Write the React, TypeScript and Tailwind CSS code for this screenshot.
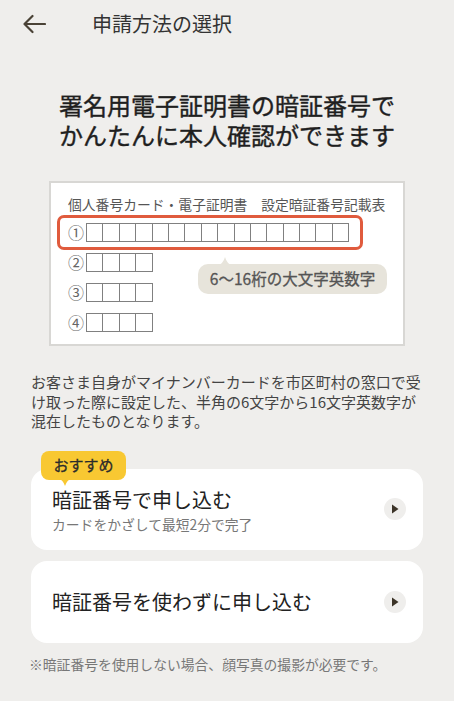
import React from "react";

const FONT = { fontFamily: '"Noto Sans CJK JP", "Noto Sans", sans-serif' };

function Cells({ n }: { n: number }) {
  return (
    <div className="flex border-l border-[#808080]">
      {Array.from({ length: n }).map((_, i) => (
        <div key={i} className="w-[16.4px] h-[19px] border-t border-b border-r border-[#808080] bg-white" />
      ))}
    </div>
  );
}

function Play() {
  return (
    <div className="w-[22px] h-[22px] rounded-full bg-[#efeeec] flex items-center justify-center shrink-0">
      <svg width="8" height="10" viewBox="0 0 8 10">
        <polygon points="1,0.5 7.5,5 1,9.5" fill="#3b3327" />
      </svg>
    </div>
  );
}

export default function App() {
  return (
    <div className="w-full min-h-[701px] bg-[#efeeec] text-[#333]" style={FONT}>
      <div className="h-[48px] flex items-center">
        <svg className="ml-[22px]" width="24" height="20" viewBox="0 0 24 20">
          <path d="M23 10H2.5M10.5 2L2.5 10L10.5 18" fill="none" stroke="#4a4236" strokeWidth="2.2" strokeLinecap="round" strokeLinejoin="round" />
        </svg>
        <div className="ml-[46px] text-[20px] leading-[28px] text-[#333]">申請方法の選択</div>
      </div>

      <div className="pt-[42px] text-center text-[24px] leading-[30px] text-[#1f1f1f] font-normal [-webkit-text-stroke:0.4px_#1f1f1f]">
        <div>署名用電子証明書の暗証番号で</div>
        <div>かんたんに本人確認ができます</div>
      </div>

      <div className="mt-[31px] mx-[49px] h-[165px] border-2 border-[#d8d7d4] bg-white relative pt-[11px]">
        <div className="pl-[17px] text-[13.8px] leading-[20px] text-[#555] whitespace-nowrap">
          個人番号カード・電子証明書　設定暗証番号記載表
        </div>
        <div className="mt-[1px] ml-[6px] w-[306px] h-[35px] border-[3px] border-[#e05b3d] rounded-[7px] flex items-center pl-[8px]">
          <span className="w-[16px] text-[16px] leading-[19px] text-[#666] text-center mr-[2px]">①</span>
          <Cells n={16} />
        </div>
        <div className="flex items-center pl-[17px] mt-[3px]">
          <span className="w-[16px] text-[16px] leading-[19px] text-[#666] text-center mr-[2px]">②</span>
          <Cells n={4} />
        </div>
        <div className="flex items-center pl-[17px] mt-[11px]">
          <span className="w-[16px] text-[16px] leading-[19px] text-[#666] text-center mr-[2px]">③</span>
          <Cells n={4} />
        </div>
        <div className="flex items-center pl-[17px] mt-[11px]">
          <span className="w-[16px] text-[16px] leading-[19px] text-[#666] text-center mr-[2px]">④</span>
          <Cells n={4} />
        </div>
        <div className="absolute left-[147px] top-[81px] w-[189px] h-[30px] bg-[#e7e4db] rounded-[10px] flex items-center justify-center text-[15.5px] text-[#555] [-webkit-text-stroke:0.3px_#555]">
          <svg className="absolute left-[20px] -top-[7px]" width="14" height="8" viewBox="0 0 14 8">
            <path d="M0 8 Q5 7 7 0 Q9 7 14 8 Z" fill="#e7e4db" />
          </svg>
          6〜16桁の大文字英数字
        </div>
      </div>

      <div className="mt-[26px] px-[31px] text-[15px] leading-[19.5px] text-[#444]">
        お客さま自身がマイナンバーカードを市区町村の窓口で受け取った際に設定した、半角の6文字から16文字英数字が混在したものとなります。
      </div>

      <div className="mx-[31px] mt-[20px] relative">
        <div className="absolute left-[10px] top-0 z-10">
          <div className="w-[85px] h-[29px] bg-[#f8c832] rounded-[8px] flex items-center justify-center text-[15px] text-[#2b2b2b] [-webkit-text-stroke:0.3px_#2b2b2b]">
            おすすめ
          </div>
          <svg className="absolute left-[18px] top-[28px]" width="12" height="7" viewBox="0 0 12 7">
            <path d="M0 0 Q4 1 6 7 Q8 1 12 0 Z" fill="#f8c832" />
          </svg>
        </div>
        <div className="pt-[18px]">
          <div className="h-[81px] bg-white rounded-[16px] flex items-center justify-between pl-[21px] pr-[17px]">
            <div className="pt-[2px]">
              <div className="text-[20px] leading-[28px] text-[#222]">暗証番号で申し込む</div>
              <div className="text-[13.8px] leading-[20px] text-[#777]">カードをかざして最短2分で完了</div>
            </div>
            <Play />
          </div>
        </div>
        <div className="mt-[11px] h-[82px] bg-white rounded-[16px] flex items-center justify-between pl-[21px] pr-[17px]">
          <div className="text-[20px] leading-[28px] text-[#222]">暗証番号を使わずに申し込む</div>
          <Play />
        </div>
      </div>

      <div className="mt-[11px] px-[29px] text-[13.8px] leading-[20px] text-[#777]">
        ※暗証番号を使用しない場合、顔写真の撮影が必要です。
      </div>
    </div>
  );
}
